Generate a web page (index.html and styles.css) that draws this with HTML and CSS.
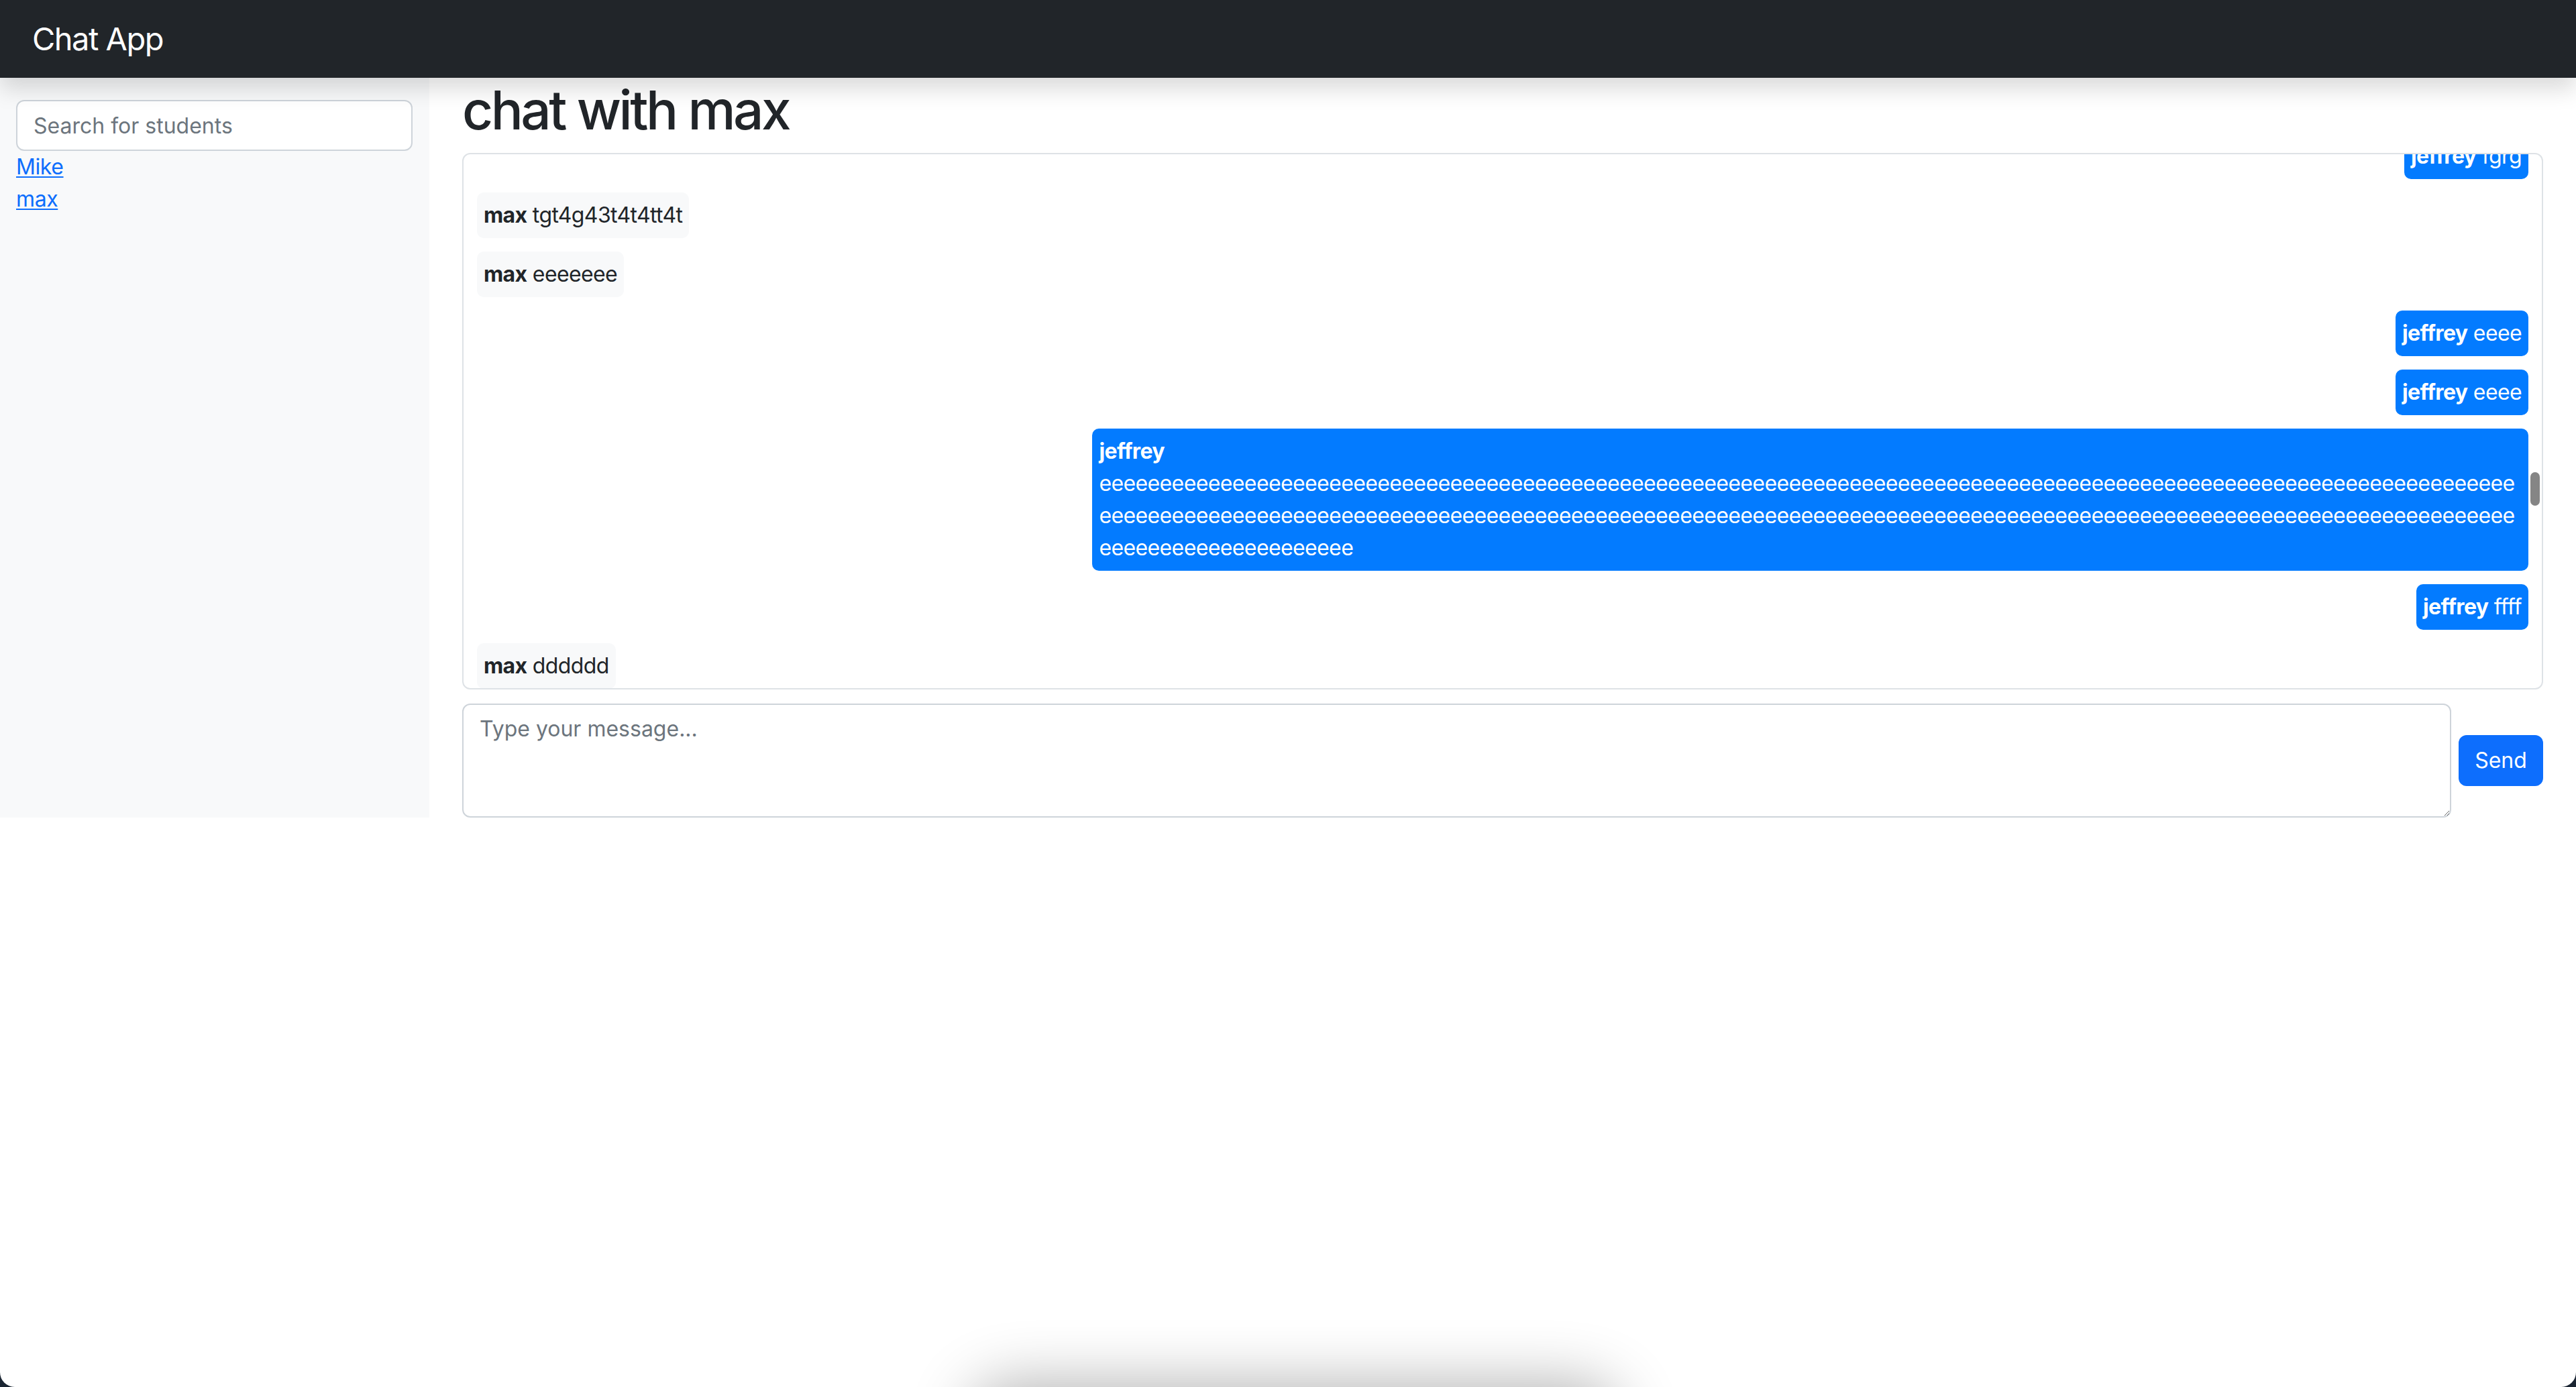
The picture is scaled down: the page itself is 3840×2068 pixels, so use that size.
FILE: index.html
```html
<!DOCTYPE html>
<html lang="en">
<head>
<meta charset="utf-8">
<title>Chat App</title>
<link rel="stylesheet" href="styles.css">
</head>
<body>
<nav class="navbar"><span class="brand">Chat App</span></nav>
<div class="layout">
  <aside class="sidebar">
    <input class="search" type="text" placeholder="Search for students">
    <ul class="student-list">
      <li><a href="#">Mike</a></li>
      <li><a href="#">max</a></li>
    </ul>
  </aside>
  <main class="chat">
    <h1 class="chat-title">chat with max</h1>
    <div class="chat-box">
      <div class="messages">
        <div class="msg msg-me"><strong>jeffrey</strong> fgrg</div>
        <div class="msg msg-them"><strong>max</strong> tgt4g43t4t4tt4t</div>
        <div class="msg msg-them"><strong>max</strong> eeeeeee</div>
        <div class="msg msg-me"><strong>jeffrey</strong> eeee</div>
        <div class="msg msg-me"><strong>jeffrey</strong> eeee</div>
        <div class="msg msg-me"><strong>jeffrey</strong> eeeeeeeeeeeeeeeeeeeeeeeeeeeeeeeeeeeeeeeeeeeeeeeeeeeeeeeeeeeeeeeeeeeeeeeeeeeeeeeeeeeeeeeeeeeeeeeeeeeeeeeeeeeeeeeeeeeeeeeeeeeeeeeeeeeeeeeeeeeeeeeeeeeeeeeeeeeeeeeeeeeeeeeeeeeeeeeeeeeeeeeeeeeeeeeeeeeeeeeeeeeeeeeeeeeeeeeeeeeeeeeeeeeeeeeeeeeeeeeeeeeeeeeeeeeeeee</div>
        <div class="msg msg-me"><strong>jeffrey</strong> ffff</div>
        <div class="msg msg-them"><strong>max</strong> dddddd</div>
      </div>
      <div class="scroll-thumb"></div>
    </div>
    <form class="composer">
      <textarea class="composer-input" placeholder="Type your message..."></textarea>
      <button class="send-btn" type="button">Send</button>
    </form>
  </main>
</div>
<div class="bottom-shadow"></div>
</body>
</html>
```
FILE: styles.css
```css
* { box-sizing: border-box; }

html {
  background: #1b2633;
}

body {
  margin: 0;
  min-height: 100vh;
  background: #ffffff;
  border-radius: 0 0 22px 22px;
  overflow: hidden;
  font-family: "Inter", "Helvetica Neue", Arial, sans-serif;
  font-size: 32px;
  line-height: 48px;
  color: #212529;
}

.navbar {
  position: relative;
  z-index: 2;
  height: 116px;
  background: #212529;
  display: flex;
  align-items: center;
  padding: 0 48px;
  box-shadow: 0 16px 32px rgba(0, 0, 0, 0.15);
}

.brand {
  color: #ffffff;
  font-size: 47px;
  line-height: 60px;
  letter-spacing: -1.5px;
}

.layout {
  display: flex;
  align-items: stretch;
}

.sidebar {
  width: 640px;
  flex: none;
  background: #f8f9fa;
  padding: 33px 25px 0 24px;
}

.search {
  display: block;
  width: 100%;
  height: 76px;
  border: 2px solid #ced4da;
  border-radius: 12px;
  padding: 0 24px;
  font-family: inherit;
  font-size: 32px;
  color: #212529;
  background: #ffffff;
  outline: none;
}

.search::placeholder { color: #6c757d; }

.student-list {
  list-style: none;
  margin: 0;
  padding: 0;
}

.student-list a {
  color: #0d6efd;
  text-decoration: underline;
  text-underline-offset: 3px;
  text-decoration-thickness: 2px;
  letter-spacing: -0.4px;
}

.chat {
  flex: 1;
  min-width: 0;
  padding: 0 49px;
}

.chat-title {
  margin: 0 0 16px;
  font-size: 80px;
  line-height: 96px;
  font-weight: 500;
  letter-spacing: -3.5px;
  color: #212529;
}

.chat-box {
  position: relative;
  height: 800px;
  border: 2px solid #dee2e6;
  border-radius: 12px;
  padding: 0 20px;
  overflow: hidden;
}

.messages {
  display: flex;
  flex-direction: column;
  align-items: flex-start;
  margin-top: -31px;
}

.msg {
  max-width: 70%;
  padding: 10px;
  margin-bottom: 20px;
  border-radius: 10px;
  overflow-wrap: anywhere;
  letter-spacing: -0.62px;
}

.msg strong { font-weight: 700; }

.msg-me {
  align-self: flex-end;
  background: #037bff;
  color: #ffffff;
}

.msg-them {
  background: #f8f9fa;
  color: #212529;
}

.scroll-thumb {
  position: absolute;
  right: 3px;
  top: 474px;
  width: 14px;
  height: 50px;
  border-radius: 7px;
  background: #858585;
}

.composer {
  display: flex;
  align-items: center;
  gap: 11px;
  margin: 21px 0 0;
}

.composer-input {
  flex: 1;
  height: 170px;
  border: 2px solid #ced4da;
  border-radius: 12px;
  padding: 12px 24px;
  font-family: inherit;
  font-size: 32px;
  line-height: 48px;
  color: #212529;
  background: #ffffff;
  outline: none;
}

.composer-input::placeholder { color: #6c757d; }

.send-btn {
  flex: none;
  width: 126px;
  height: 76px;
  border: none;
  border-radius: 12px;
  background: #0d6efd;
  color: #ffffff;
  font-family: inherit;
  font-size: 32px;
  line-height: 48px;
  padding: 0;
}

.bottom-shadow {
  position: fixed;
  left: 1450px;
  width: 960px;
  top: 100vh;
  height: 120px;
  border-radius: 60px;
  box-shadow: 0 0 90px 6px rgba(0, 0, 0, 0.3);
  pointer-events: none;
}
```
